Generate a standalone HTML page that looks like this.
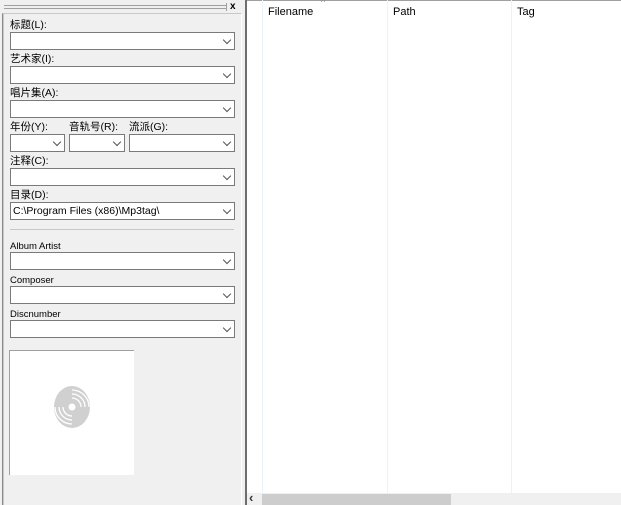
<!DOCTYPE html>
<html><head><meta charset="utf-8"><style>
*{margin:0;padding:0;box-sizing:border-box}
body{width:621px;height:505px;overflow:hidden;background:#f0f0f0;font-family:"Liberation Sans","Noto Sans CJK SC",sans-serif;font-size:11px;color:#000;position:relative}
.a{position:absolute}
.lbl{position:absolute;left:10px;font-size:10.5px;line-height:13px;white-space:nowrap}
.cb{position:absolute;height:18px;background:#fff;border:1px solid #7a7a7a}
.cb::after{content:"";position:absolute;right:4px;top:4px;width:5px;height:5px;border-right:1px solid #555;border-bottom:1px solid #555;transform:rotate(45deg)}
.cb span{position:absolute;left:2px;top:2px;font-size:10.5px;line-height:13px}
.col{position:absolute;top:0;height:493px;width:1px;background:#eaf2fa}
.hd{position:absolute;top:6px;font-size:11px}
</style></head><body>
<div class="a" style="left:4px;top:5px;width:222px;height:4px;border-top:1px solid #a0a0a0;border-bottom:1px solid #a0a0a0"></div>
<div class="a" style="left:226px;top:3px;width:1px;height:8px;background:#a0a0a0"></div>
<div class="a" style="left:230px;top:1px;font-size:10px;font-weight:bold">x</div>
<div class="a" style="left:2px;top:13px;width:240px;height:492px;border-left:1px solid #8a8a8a;border-top:1px solid #c8c8c8;border-right:1px solid #fff"></div>
<div class="a" style="left:3px;top:14px;width:1px;height:491px;background:#c8c8c8"></div>

<div class="lbl" style="top:19px">标题(L):</div>
<div class="cb" style="left:10px;top:32px;width:225px"></div>
<div class="lbl" style="top:53px">艺术家(I):</div>
<div class="cb" style="left:10px;top:66px;width:225px"></div>
<div class="lbl" style="top:87px">唱片集(A):</div>
<div class="cb" style="left:10px;top:100px;width:225px"></div>
<div class="lbl" style="top:121px">年份(Y):</div>
<div class="lbl" style="top:121px;left:69px">音轨号(R):</div>
<div class="lbl" style="top:121px;left:129px">流派(G):</div>
<div class="cb" style="left:10px;top:134px;width:55px"></div>
<div class="cb" style="left:69px;top:134px;width:56px"></div>
<div class="cb" style="left:129px;top:134px;width:106px"></div>
<div class="lbl" style="top:155px">注释(C):</div>
<div class="cb" style="left:10px;top:168px;width:225px"></div>
<div class="lbl" style="top:189px">目录(D):</div>
<div class="cb" style="left:10px;top:202px;width:225px"><span>C:\Program Files (x86)\Mp3tag\</span></div>
<div class="a" style="left:10px;top:229px;width:224px;height:1px;background:#c8c8c8"></div>
<div class="lbl" style="top:240px;font-size:9.5px">Album Artist</div>
<div class="cb" style="left:10px;top:252px;width:225px"></div>
<div class="lbl" style="top:274px;font-size:9.5px">Composer</div>
<div class="cb" style="left:10px;top:286px;width:225px"></div>
<div class="lbl" style="top:308px;font-size:9.5px">Discnumber</div>
<div class="cb" style="left:10px;top:320px;width:225px"></div>
<div class="a" style="left:9px;top:350px;width:125px;height:125px;background:#fff;border-top:1px solid #a0a0a0;border-left:1px solid #a0a0a0"></div>
<svg class="a" style="left:49px;top:385px" width="46" height="44" viewBox="0 0 46 44">
<ellipse cx="23" cy="22" rx="18" ry="21" fill="#d0d0d0"/>
<g fill="none" stroke="#fff" stroke-width="1.3">
<path d="M23 13 A9 9 0 0 1 32 22"/><path d="M23 9 A13 13 0 0 1 36 22"/><path d="M23 5 A17 17 0 0 1 40 22"/>
<path d="M23 31 A9 9 0 0 1 14 22"/><path d="M23 35 A13 13 0 0 1 10 22"/><path d="M23 39 A17 17 0 0 1 6 22"/>
</g>
<circle cx="23" cy="22" r="3.5" fill="#fff"/>
</svg>

<div class="a" style="left:245px;top:0;width:2px;height:505px;background:#6e6e6e"></div>
<div class="a" style="left:247px;top:0;width:374px;height:493px;background:#fff;border-top:1px solid #a0a0a0"></div>
<div class="col" style="left:262px"></div>
<div class="col" style="left:387px"></div>
<div class="col" style="left:511px"></div>
<div class="hd" style="left:268px">Filename</div>
<div class="hd" style="left:393px">Path</div>
<div class="hd" style="left:517px">Tag</div>
<div class="a" style="left:321px;top:-3px;font-size:9px;color:#888">^</div>
<div class="a" style="left:247px;top:493px;width:374px;height:12px;background:#f0f0f0"></div>
<div class="a" style="left:249px;top:490px;font-size:13px;font-weight:bold;color:#333">‹</div>
<div class="a" style="left:262px;top:494px;width:189px;height:11px;background:#cdcdcd"></div>
</body></html>
